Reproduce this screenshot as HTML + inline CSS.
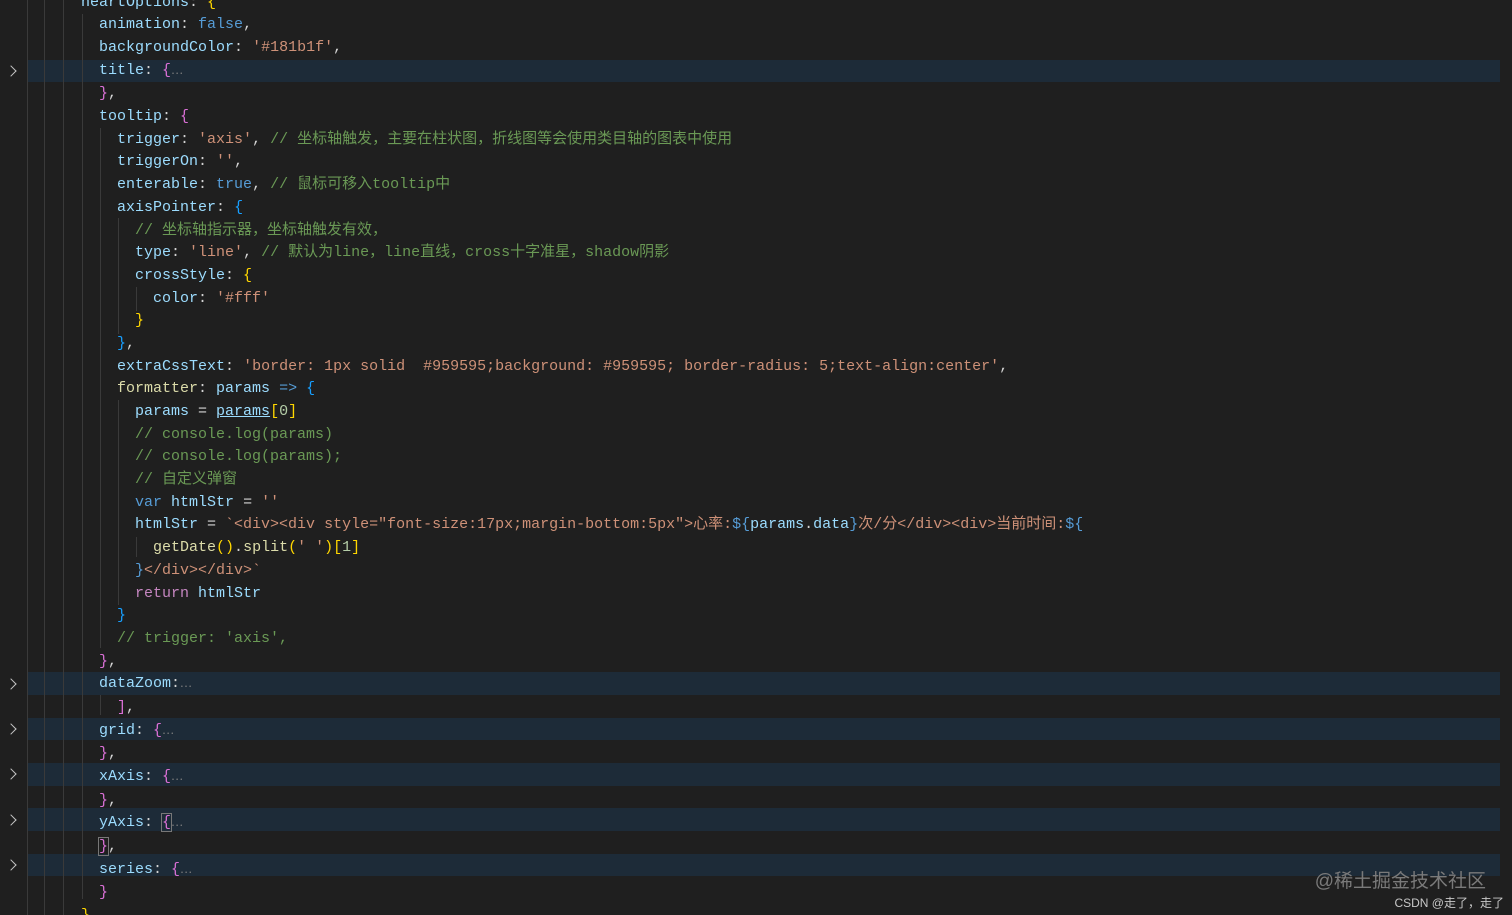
<!DOCTYPE html>
<html><head><meta charset="utf-8"><style>
html,body{margin:0;padding:0;background:#1f1f1f;width:1512px;height:915px;overflow:hidden;position:relative}
.code{position:absolute;left:81px;top:-8.34px;margin:0;font-family:"Liberation Mono","Noto Sans CJK SC",monospace;font-size:15px;line-height:22.68px;color:#d4d4d4;white-space:pre;z-index:2}
.hl{position:absolute;left:28px;width:1472px;height:22.68px;background:#1d2b38;z-index:0}
.g{position:absolute;top:0;width:1px;background:#3a3a3a;z-index:1}
.arr{position:absolute;left:7px;width:7px;height:7px;border-right:1.5px solid #c5c5c5;border-top:1.5px solid #c5c5c5;transform:rotate(45deg);z-index:2}
.k{color:#9cdcfe}.s{color:#ce9178}.c{color:#6a9955}.b{color:#569cd6}.y{color:#ffd700}.p{color:#da70d6}.bl{color:#179fff}.f{color:#dcdcaa}.e{color:#808080;font-size:11px}
.wm{position:absolute;right:26px;top:866px;font-family:"Liberation Sans","Noto Sans CJK SC",sans-serif;font-size:19px;color:#7a7a7a;z-index:3}
.wm2{position:absolute;right:8px;top:894px;font-family:"Liberation Sans","Noto Sans CJK SC",sans-serif;font-size:12px;color:#c8c8c8;z-index:3}
</style></head><body>
<div class="hl" style="top:59.7px"></div>
<div class="hl" style="top:672.4px"></div>
<div class="hl" style="top:717.7px"></div>
<div class="hl" style="top:763.1px"></div>
<div class="hl" style="top:808.4px"></div>
<div class="hl" style="top:853.8px"></div>
<div class="g" style="left:27px;height:915px"></div>
<div class="g" style="left:44px;height:915px"></div>
<div class="g" style="left:63px;height:915px"></div>
<div class="g" style="left:82px;top:14px;height:885px"></div>
<div class="g" style="left:100px;top:128px;height:520px"></div>
<div class="g" style="left:118px;top:218px;height:116px"></div>
<div class="g" style="left:136px;top:287px;height:24px"></div>
<div class="g" style="left:118px;top:400px;height:205px"></div>
<div class="g" style="left:136px;top:537px;height:20px"></div>
<div class="g" style="left:100px;top:695px;height:20px"></div>
<div class="arr" style="top:67px"></div>
<div class="arr" style="top:680px"></div>
<div class="arr" style="top:725px"></div>
<div class="arr" style="top:770px"></div>
<div class="arr" style="top:816px"></div>
<div class="arr" style="top:861px"></div>
<pre class="code"><span class="k">heartOptions</span>: <span class="y">{</span>
  <span class="k">animation</span>: <span class="b">false</span>,
  <span class="k">backgroundColor</span>: <span class="s">'#181b1f'</span>,
  <span class="k">title</span>: <span class="p">{</span><span class="e">⋯</span>
  <span class="p">}</span>,
  <span class="k">tooltip</span>: <span class="p">{</span>
    <span class="k">trigger</span>: <span class="s">'axis'</span>, <span class="c">// 坐标轴触发，主要在柱状图，折线图等会使用类目轴的图表中使用</span>
    <span class="k">triggerOn</span>: <span class="s">''</span>,
    <span class="k">enterable</span>: <span class="b">true</span>, <span class="c">// 鼠标可移入tooltip中</span>
    <span class="k">axisPointer</span>: <span class="bl">{</span>
      <span class="c">// 坐标轴指示器，坐标轴触发有效，</span>
      <span class="k">type</span>: <span class="s">'line'</span>, <span class="c">// 默认为line，line直线，cross十字准星，shadow阴影</span>
      <span class="k">crossStyle</span>: <span class="y">{</span>
        <span class="k">color</span>: <span class="s">'#fff'</span>
      <span class="y">}</span>
    <span class="bl">}</span>,
    <span class="k">extraCssText</span>: <span class="s">'border: 1px solid  #959595;background: #959595; border-radius: 5;text-align:center'</span>,
    <span class="f">formatter</span>: <span class="k">params</span> <span class="b">=&gt;</span> <span class="bl">{</span>
      <span class="k">params</span> = <span class="k" style="text-decoration:underline">params</span><span class="y">[</span><span style="color:#b5cea8">0</span><span class="y">]</span>
      <span class="c">// console.log(params)</span>
      <span class="c">// console.log(params);</span>
      <span class="c">// 自定义弹窗</span>
      <span class="b">var</span> <span class="k">htmlStr</span> = <span class="s">''</span>
      <span class="k">htmlStr</span> = <span class="s">`&lt;div&gt;&lt;div style="font-size:17px;margin-bottom:5px"&gt;心率:</span><span class="b">${</span><span class="k">params</span>.<span class="k">data</span><span class="b">}</span><span class="s">次/分&lt;/div&gt;&lt;div&gt;当前时间:</span><span class="b">${</span>
        <span class="f">getDate</span><span class="y">()</span>.<span class="f">split</span><span class="y">(</span><span class="s">' '</span><span class="y">)[</span><span style="color:#b5cea8">1</span><span class="y">]</span>
      <span class="b">}</span><span class="s">&lt;/div&gt;&lt;/div&gt;`</span>
      <span style="color:#c586c0">return</span> <span class="k">htmlStr</span>
    <span class="bl">}</span>
    <span class="c">// trigger: 'axis',</span>
  <span class="p">}</span>,
  <span class="k">dataZoom</span>:<span class="e">⋯</span>
    <span class="p">]</span>,
  <span class="k">grid</span>: <span class="p">{</span><span class="e">⋯</span>
  <span class="p">}</span>,
  <span class="k">xAxis</span>: <span class="p">{</span><span class="e">⋯</span>
  <span class="p">}</span>,
  <span class="k">yAxis</span>: <span class="p" style="outline:1px solid #777">{</span><span class="e">⋯</span>
  <span class="p" style="outline:1px solid #777">}</span>,
  <span class="k">series</span>: <span class="p">{</span><span class="e">⋯</span>
  <span class="p">}</span>
<span class="y">}</span>,</pre>
<div class="wm">@稀土掘金技术社区</div>
<div class="wm2">CSDN @走了，走了</div>
</body></html>
